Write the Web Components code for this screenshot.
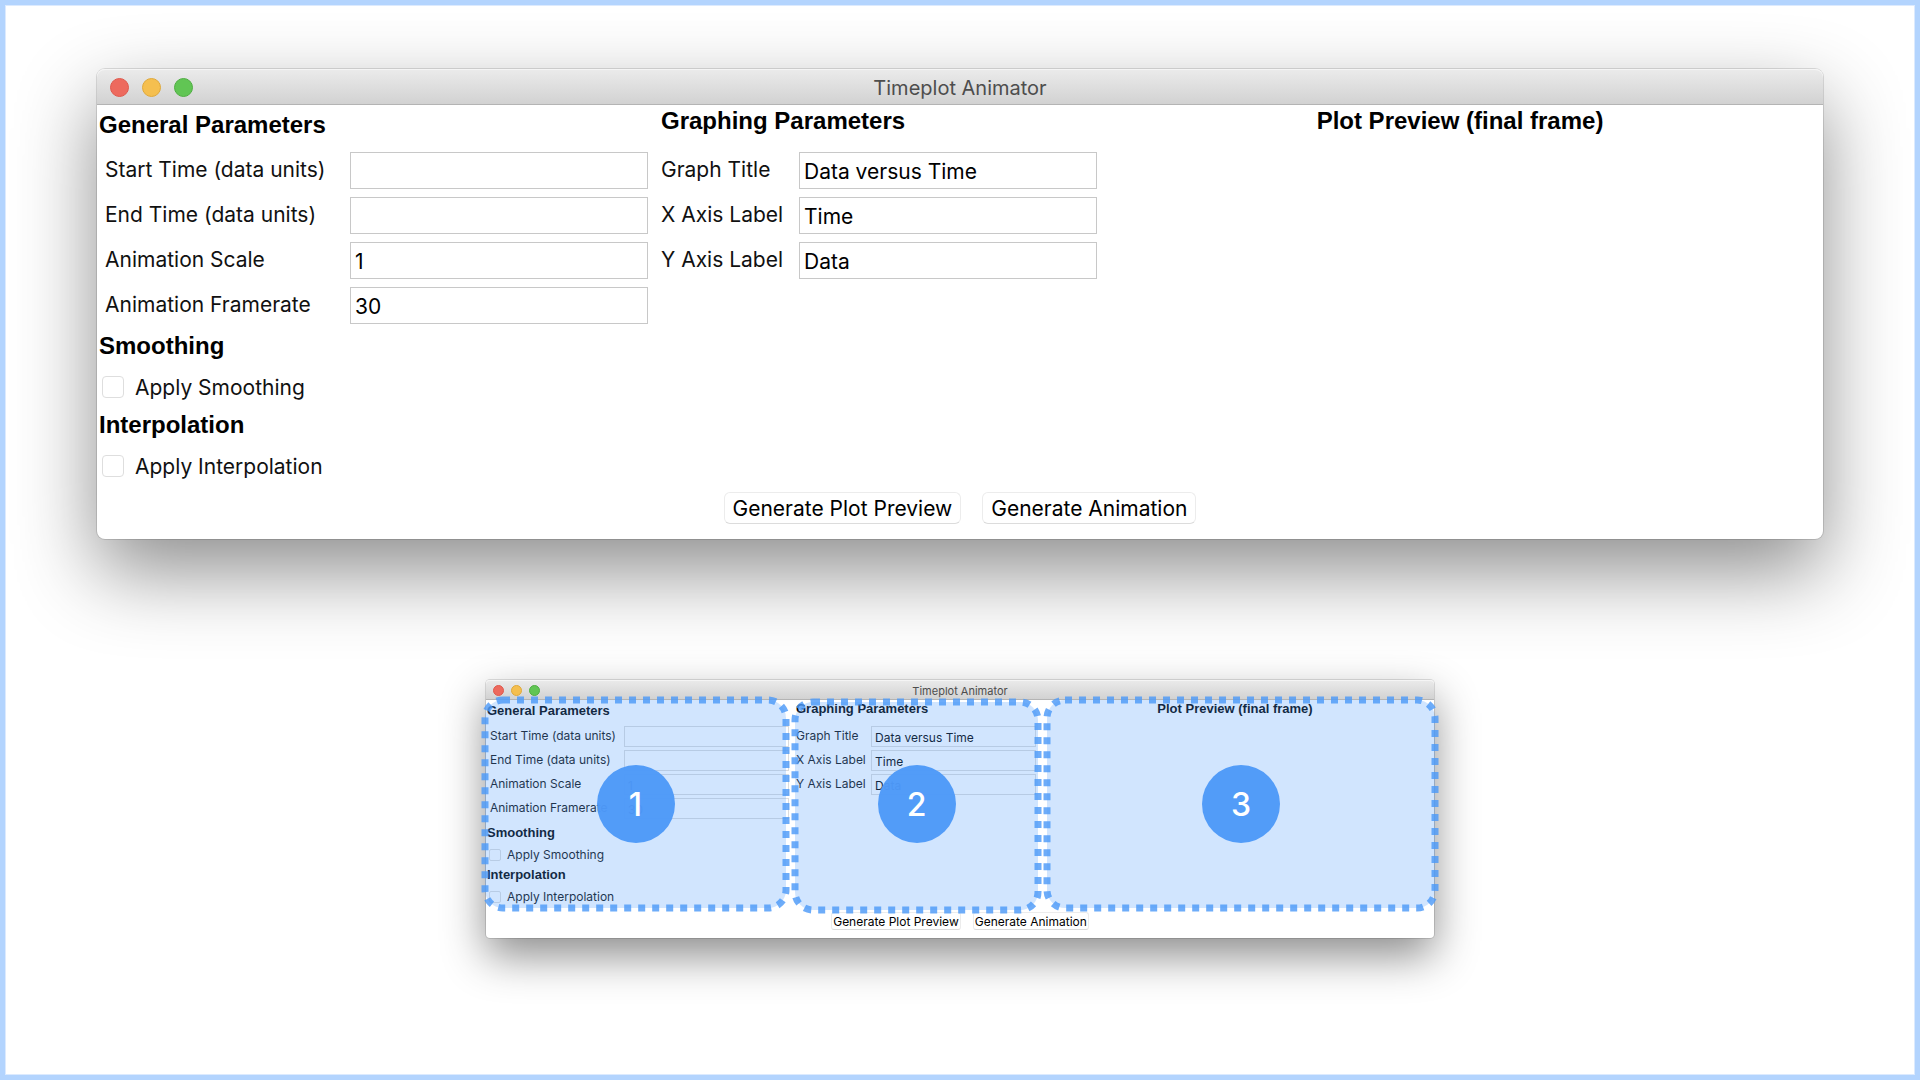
<!DOCTYPE html>
<html lang="en">
<head>
<meta charset="utf-8">
<title>Timeplot Animator</title>
<style>
  body { margin: 0; background: #fff; }
</style>
</head>
<body>
<guide-page>
  <timeplot-window></timeplot-window>
  <timeplot-window compact>
    <region-marker slot="overlay" class="general" number="1"></region-marker>
    <region-marker slot="overlay" class="graphing" number="2"></region-marker>
    <region-marker slot="overlay" class="preview" number="3"></region-marker>
  </timeplot-window>
</guide-page>

<script>
const define = (name, html, setup) => {
  const template = document.createElement('template');
  template.innerHTML = html;
  customElements.define(name, class extends HTMLElement {
    constructor() {
      super();
      this.attachShadow({ mode: 'open' }).append(template.content.cloneNode(true));
    }
    connectedCallback() {
      if (setup) setup(this, this.shadowRoot);
    }
  });
};

/* Page frame that stacks the full-size window over its annotated copy */
define('guide-page', `
  <style>
    :host {
      display: flex; flex-direction: column; align-items: center; gap: 141px;
      box-sizing: border-box; min-height: 100vh; padding: 64px 92px;
      border: 5px solid #b3d4fe; outline: 1px solid #dceafe; outline-offset: -6px;
      overflow: hidden;
    }
  </style>
  <slot></slot>`);

/* One labelled text box */
define('text-field', `
  <style>
    :host { display: flex; }
    label {
      box-sizing: border-box; width: var(--label-width); height: var(--field-height);
      padding-bottom: 1px; line-height: calc(var(--field-height) - 1px); white-space: nowrap;
    }
    input {
      box-sizing: border-box; width: var(--field-width); height: var(--field-height); margin: 0;
      padding: 1px var(--field-pad) 0; border: 1px solid var(--field-border); border-radius: 0;
      background: #fff; color: #000; font: inherit; outline: 0;
    }
  </style>
  <label for="field"></label><input id="field" type="text">`,
  (host, root) => {
    root.querySelector('label').textContent = host.getAttribute('label');
    root.querySelector('input').value = host.getAttribute('value') || '';
  });

/* Tick box followed by its caption */
define('check-field', `
  <style>
    :host {
      display: flex; align-items: center; box-sizing: border-box;
      height: var(--check-row); padding: var(--check-pad) 0 0 var(--check-indent);
      gap: var(--check-gap);
    }
    input {
      appearance: none; box-sizing: border-box; width: var(--check-size); height: var(--check-size);
      margin: 0; border: 1px solid #dedede; border-radius: var(--check-radius); background: #fff;
    }
    label { white-space: nowrap; }
  </style>
  <input id="check" type="checkbox"><label for="check"></label>`,
  (host, root) => {
    root.querySelector('label').textContent = host.getAttribute('label');
  });

define('push-button', `
  <style>
    :host { display: block; }
    button {
      box-sizing: border-box; height: var(--button-height); margin: 0; padding: 0 var(--button-pad);
      border: 1px solid #ececec; border-bottom-color: #dcdcdc; border-radius: var(--button-radius);
      background: #fff; color: #000; font: inherit; white-space: nowrap;
    }
  </style>
  <button type="button"><slot></slot></button>`);

/* Dashed area with a numbered disc */
define('region-marker', `
  <style>
    :host { display: grid; justify-items: center; align-items: start; min-width: 0; }
    svg, span { grid-area: 1 / 1; }
    svg { width: 100%; height: 100%; overflow: visible; }
    rect { fill: rgba(77, 154, 251, .26); stroke: rgba(77, 154, 248, .82); stroke-width: 7; stroke-dasharray: 7 7; }
    span {
      width: 78px; height: 78px; margin-top: var(--disc-top, 65px); border-radius: 50%;
      background: rgba(77, 153, 248, .97); color: #fff;
      font: 500 32px/80px "Inter", "Liberation Sans", sans-serif; text-align: center;
    }
  </style>
  <svg aria-hidden="true"><rect width="100%" height="100%" rx="18"></rect></svg>
  <span></span>`,
  (host, root) => {
    root.querySelector('span').textContent = host.getAttribute('number');
  });

define('timeplot-window', `
  <style>
    :host {
      --font: 21px; --heading: 24px; --title-height: 36px; --title-font: 20px;
      --light: 19px; --light-gap: 13px; --light-indent: 13px; --corner: 8px;
      --label-width: 245px; --field-width: 298px; --field-height: 37px; --field-pad: 4px; --field-gap: 8px;
      --field-border: #c8c8c8;
      --general-head: 40px; --general-space: 7px; --other-head: 32px; --other-space: 15px;
      --head-indent: 2px; --indent: 8px; --column-gap: 13px; --section-space: 2px;
      --check-row: 39px; --check-pad: 3px; --check-indent: 5px; --check-gap: 11px;
      --check-size: 22px; --check-radius: 4px;
      --button-height: 32px; --button-pad: 8px; --button-radius: 6px; --button-gap: 21px;
      --footer: 8px 0 15px;
      display: block; position: relative; width: 100%; box-sizing: border-box;
      border-radius: var(--corner); background: #fff;
      box-shadow: 0 0 0 1px rgba(0, 0, 0, .12), 0 32px 80px rgba(0, 0, 0, .45);
      font: var(--font)/normal "Inter", "Liberation Sans", sans-serif; color: #111;
    }
    :host([compact]) {
      --font: 12px; --heading: 13px; --title-height: 20px; --title-font: 11px;
      --light: 11px; --light-gap: 7px; --light-indent: 7px; --corner: 4px;
      --label-width: 134px; --field-width: 165px; --field-height: 21px; --field-pad: 3px; --field-gap: 3px;
      --field-border: #dcdcdc;
      --general-head: 22px; --general-space: 4px; --other-head: 17px; --other-space: 9px;
      --head-indent: 1px; --indent: 4px; --column-gap: 7px; --section-space: 3px;
      --check-row: 20px; --check-pad: 1px; --check-indent: 3px; --check-gap: 6px;
      --check-size: 12px; --check-radius: 2px;
      --button-height: 18px; --button-pad: 1px; --button-radius: 3px; --button-gap: 12px;
      --footer: 6px 0 8px;
      max-width: 948px;
      box-shadow: 0 0 0 1px rgba(0, 0, 0, .12), 0 18px 44px rgba(0, 0, 0, .45);
    }
    header {
      display: grid; grid-template-columns: 1fr auto 1fr; align-items: center;
      box-sizing: border-box; height: var(--title-height); padding-top: 2px;
      border-bottom: 1px solid #b4b4b4; border-radius: var(--corner) var(--corner) 0 0;
      background: linear-gradient(#ebebeb, #d2d2d2); box-shadow: inset 0 1px #f5f5f5;
      font-size: var(--title-font); color: #4d4d4d;
    }
    .lights { display: flex; gap: var(--light-gap); padding-left: var(--light-indent); }
    .lights i {
      box-sizing: border-box; width: var(--light); height: var(--light); border-radius: 50%;
      background: #ed6a5e; border: 1px solid #e0594d;
    }
    .lights i:nth-child(2) { background: #f5bf4f; border-color: #e0a93a; }
    .lights i:nth-child(3) { background: #61c554; border-color: #4fae42; }
    main { display: flex; gap: var(--column-gap); }
    .graphing { --label-width: 138px; }
    :host([compact]) .graphing { --label-width: 75px; }
    .preview { flex: 1; margin-left: calc(0px - var(--column-gap)); text-align: center; }
    h2 {
      margin: 0; color: #000; white-space: nowrap;
      font: bold var(--heading)/var(--general-head) "Liberation Sans", Arial, sans-serif;
    }
    .general h2 { padding-left: var(--head-indent); }
    .fields { display: flex; flex-direction: column; gap: var(--field-gap); }
    .general .fields { padding: var(--general-space) 0 var(--section-space) var(--indent); }
    .graphing h2, .preview h2 { line-height: var(--other-head); }
    .graphing .fields { padding-top: var(--other-space); }
    footer { display: flex; justify-content: center; gap: var(--button-gap); padding: var(--footer); }
    .overlay {
      position: absolute; inset: 20px -1px 30px; display: none; gap: 9px;
      pointer-events: none;
    }
    :host([compact]) .overlay { display: flex; }
    ::slotted(.general) { flex: 301; }
    ::slotted(.graphing) { flex: 243; margin: 2px 0 -2px; --disc-top: 63px; }
    ::slotted(.preview) { flex: 388; }
  </style>
  <header>
    <div class="lights"><i></i><i></i><i></i></div>
    <span>Timeplot Animator</span>
  </header>
  <main>
    <section class="general">
      <h2>General Parameters</h2>
      <div class="fields">
        <text-field label="Start Time (data units)"></text-field>
        <text-field label="End Time (data units)"></text-field>
        <text-field label="Animation Scale" value="1"></text-field>
        <text-field label="Animation Framerate" value="30"></text-field>
      </div>
      <h2>Smoothing</h2>
      <check-field label="Apply Smoothing"></check-field>
      <h2>Interpolation</h2>
      <check-field label="Apply Interpolation"></check-field>
    </section>
    <section class="graphing">
      <h2>Graphing Parameters</h2>
      <div class="fields">
        <text-field label="Graph Title" value="Data versus Time"></text-field>
        <text-field label="X Axis Label" value="Time"></text-field>
        <text-field label="Y Axis Label" value="Data"></text-field>
      </div>
    </section>
    <section class="preview">
      <h2>Plot Preview (final frame)</h2>
    </section>
  </main>
  <footer>
    <push-button>Generate Plot Preview</push-button>
    <push-button>Generate Animation</push-button>
  </footer>
  <div class="overlay"><slot name="overlay"></slot></div>`);
</script>
</body>
</html>
